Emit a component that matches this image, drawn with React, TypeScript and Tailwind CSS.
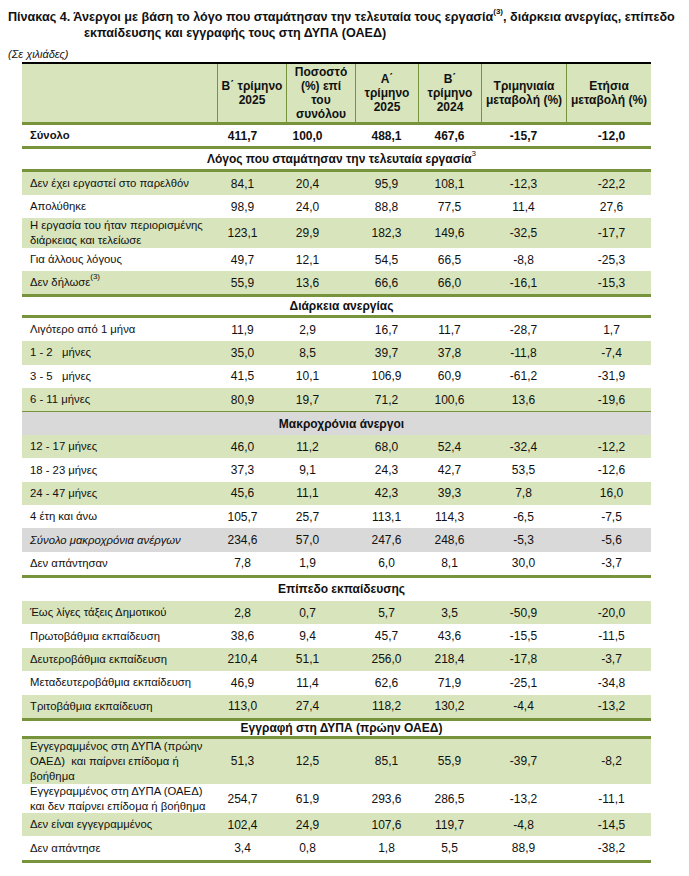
import React from 'react';

type Row = {
  label: React.ReactNode;
  values: string[];
  bg: 'green' | 'white' | 'gray';
  h: string;
  italic?: boolean;
  bold?: boolean;
};

const GRID = 'grid grid-cols-[195px_69px_69px_63px_63px_85px_85px]';

const bgClass = {
  green: 'bg-[#d8e4bc]',
  white: 'bg-white',
  gray: 'bg-[#d9d9d9]',
};

function Border({ thin = false }: { thin?: boolean }) {
  return <div className={thin ? 'h-px bg-[#77933c]' : 'h-[3px] bg-[#77933c]'} />;
}

function Section({ title, h, gray = false }: { title: React.ReactNode; h: string; gray?: boolean }) {
  return (
    <div className={`flex items-center justify-center font-bold ${h} ${gray ? 'bg-[#d9d9d9]' : 'bg-white'}`}>
      <span className="pl-[10px]">{title}</span>
    </div>
  );
}

function DataRow({ row }: { row: Row }) {
  const weight = row.bold ? 'font-bold' : '';
  return (
    <div className={`${GRID} items-center ${bgClass[row.bg]} ${row.h} ${weight}`}>
      <div className={`pl-[8px] text-[11.3px] leading-[15px] whitespace-nowrap ${row.italic ? 'italic' : ''}`}>{row.label}</div>
      <div className="text-center pr-[18px]">{row.values[0]}</div>
      <div className="text-center pr-[26px]">{row.values[1]}</div>
      <div className="text-center">{row.values[2]}</div>
      <div className="text-center">{row.values[3]}</div>
      <div className="text-center">{row.values[4]}</div>
      <div className="text-center pl-[6px]">{row.values[5]}</div>
    </div>
  );
}

const sup = 'text-[8px] align-[3px] leading-none';

const reasons: Row[] = [
  { label: 'Δεν έχει εργαστεί στο παρελθόν', values: ['84,1', '20,4', '95,9', '108,1', '-12,3', '-22,2'], bg: 'green', h: 'h-[23px]' },
  { label: 'Απολύθηκε', values: ['98,9', '24,0', '88,8', '77,5', '11,4', '27,6'], bg: 'white', h: 'h-[23px]' },
  {
    label: (
      <>
        Η εργασία του ήταν περιορισμένης
        <br />
        διάρκειας και τελείωσε
      </>
    ),
    values: ['123,1', '29,9', '182,3', '149,6', '-32,5', '-17,7'],
    bg: 'green',
    h: 'h-[30px]',
  },
  { label: 'Για άλλους λόγους', values: ['49,7', '12,1', '54,5', '66,5', '-8,8', '-25,3'], bg: 'white', h: 'h-[23px]' },
  {
    label: (
      <>
        Δεν δήλωσε<sup className={sup}>(3)</sup>
      </>
    ),
    values: ['55,9', '13,6', '66,6', '66,0', '-16,1', '-15,3'],
    bg: 'green',
    h: 'h-[23px]',
  },
];

const duration: Row[] = [
  { label: 'Λιγότερο από 1 μήνα', values: ['11,9', '2,9', '16,7', '11,7', '-28,7', '1,7'], bg: 'white', h: 'h-[23.3px]' },
  { label: '1 - 2\u00a0\u00a0 μήνες', values: ['35,0', '8,5', '39,7', '37,8', '-11,8', '-7,4'], bg: 'green', h: 'h-[23.3px]' },
  { label: '3 - 5\u00a0\u00a0 μήνες', values: ['41,5', '10,1', '106,9', '60,9', '-61,2', '-31,9'], bg: 'white', h: 'h-[23.3px]' },
  { label: '6 - 11 μήνες', values: ['80,9', '19,7', '71,2', '100,6', '13,6', '-19,6'], bg: 'green', h: 'h-[23.3px]' },
];

const longTerm: Row[] = [
  { label: '12 - 17 μήνες', values: ['46,0', '11,2', '68,0', '52,4', '-32,4', '-12,2'], bg: 'green', h: 'h-[23.3px]' },
  { label: '18 - 23 μήνες', values: ['37,3', '9,1', '24,3', '42,7', '53,5', '-12,6'], bg: 'white', h: 'h-[23.3px]' },
  { label: '24 - 47 μήνες', values: ['45,6', '11,1', '42,3', '39,3', '7,8', '16,0'], bg: 'green', h: 'h-[23.3px]' },
  { label: '4 έτη και άνω', values: ['105,7', '25,7', '113,1', '114,3', '-6,5', '-7,5'], bg: 'white', h: 'h-[23.3px]' },
  { label: 'Σύνολο μακροχρόνια ανέργων', values: ['234,6', '57,0', '247,6', '248,6', '-5,3', '-5,6'], bg: 'gray', h: 'h-[23.3px]', italic: true },
  { label: 'Δεν απάντησαν', values: ['7,8', '1,9', '6,0', '8,1', '30,0', '-3,7'], bg: 'white', h: 'h-[23.3px]' },
];

const education: Row[] = [
  { label: 'Έως λίγες τάξεις Δημοτικού', values: ['2,8', '0,7', '5,7', '3,5', '-50,9', '-20,0'], bg: 'green', h: 'h-[23.4px]' },
  { label: 'Πρωτοβάθμια εκπαίδευση', values: ['38,6', '9,4', '45,7', '43,6', '-15,5', '-11,5'], bg: 'white', h: 'h-[23.4px]' },
  { label: 'Δευτεροβάθμια εκπαίδευση', values: ['210,4', '51,1', '256,0', '218,4', '-17,8', '-3,7'], bg: 'green', h: 'h-[23.4px]' },
  { label: 'Μεταδευτεροβάθμια εκπαίδευση', values: ['46,9', '11,4', '62,6', '71,9', '-25,1', '-34,8'], bg: 'white', h: 'h-[23.4px]' },
  { label: 'Τριτοβάθμια εκπαίδευση', values: ['113,0', '27,4', '118,2', '130,2', '-4,4', '-13,2'], bg: 'green', h: 'h-[23.4px]' },
];

const registration: Row[] = [
  {
    label: (
      <>
        Εγγεγραμμένος στη ΔΥΠΑ (πρώην
        <br />
        ΟΑΕΔ)&nbsp; και παίρνει επίδομα ή
        <br />
        βοήθημα
      </>
    ),
    values: ['51,3', '12,5', '85,1', '55,9', '-39,7', '-8,2'],
    bg: 'green',
    h: 'h-[45px]',
  },
  {
    label: (
      <>
        Εγγεγραμμένος στη ΔΥΠΑ (ΟΑΕΔ)
        <br />
        και δεν παίρνει επίδομα ή βοήθημα
      </>
    ),
    values: ['254,7', '61,9', '293,6', '286,5', '-13,2', '-11,1'],
    bg: 'white',
    h: 'h-[29px]',
  },
  { label: 'Δεν είναι εγγεγραμμένος', values: ['102,4', '24,9', '107,6', '119,7', '-4,8', '-14,5'], bg: 'green', h: 'h-[23.5px]' },
  { label: 'Δεν απάντησε', values: ['3,4', '0,8', '1,8', '5,5', '88,9', '-38,2'], bg: 'white', h: 'h-[23.5px]' },
];

const headers = [
  ['Β΄ τρίμηνο', '2025'],
  ['Ποσοστό', '(%) επί', 'του', 'συνόλου'],
  ['Α΄', 'τρίμηνο', '2025'],
  ['Β΄', 'τρίμηνο', '2024'],
  ['Τριμηνιαία', 'μεταβολή (%)'],
  ['Ετήσια', 'μεταβολή (%)'],
];

export default function App() {
  return (
    <div className="min-h-[876px] bg-white text-[12px] text-[#111] font-['Liberation_Sans',Arial,sans-serif]">
      <div className="pt-[9px] pl-[84px] -indent-[76px] font-bold text-[12.6px] leading-[16px] whitespace-nowrap">
        Πίνακας 4. Άνεργοι με βάση το λόγο που σταμάτησαν την τελευταία τους εργασία
        <sup className={sup}>(3)</sup>, διάρκεια ανεργίας, επίπεδο
        <br />
        εκπαίδευσης και εγγραφής τους στη ΔΥΠΑ (ΟΑΕΔ)
      </div>

      <div className="pl-[8px] pt-[6px] italic text-[11px] leading-[14px]">(Σε χιλιάδες)</div>

      <div className="ml-[22px] w-[629px] mt-[1px]">
        <div className="h-[2px] bg-black" />
        <div className={`${GRID} h-[58px] bg-[#d8e4bc] font-bold leading-[14px]`}>
          <div />
          {headers.map((lines, i) => (
            <div key={i} className="flex flex-col items-center justify-center text-center border-l border-[#77933c]">
              {lines.map((l) => (
                <span key={l}>{l}</span>
              ))}
            </div>
          ))}
        </div>
        <Border />
        <DataRow
          row={{ label: 'Σύνολο', values: ['411,7', '100,0', '488,1', '467,6', '-15,7', '-12,0'], bg: 'white', h: 'h-[21px]', bold: true }}
        />
        <Border />
        <Section
          h="h-[20px]"
          title={
            <>
              Λόγος που σταμάτησαν την τελευταία εργασία<sup className={`${sup} font-normal`}>3</sup>
            </>
          }
        />
        <Border />
        {reasons.map((r, i) => (
          <DataRow key={i} row={r} />
        ))}
        <Border />
        <Section h="h-[18px]" title="Διάρκεια ανεργίας" />
        <Border />
        {duration.map((r, i) => (
          <DataRow key={i} row={r} />
        ))}
        <Border thin />
        <Section h="h-[23px]" title="Μακροχρόνια άνεργοι" gray />
        {longTerm.map((r, i) => (
          <DataRow key={i} row={r} />
        ))}
        <Border />
        <Section h="h-[23px]" title="Επίπεδο εκπαίδευσης" />
        {education.map((r, i) => (
          <DataRow key={i} row={r} />
        ))}
        <Border />
        <Section h="h-[15px]" title="Εγγραφή στη ΔΥΠΑ (πρώην ΟΑΕΔ)" />
        <Border />
        {registration.map((r, i) => (
          <DataRow key={i} row={r} />
        ))}
        <Border />
      </div>

      <div className="ml-[22px] mt-[13px] h-px w-[183px] bg-black" />
    </div>
  );
}
